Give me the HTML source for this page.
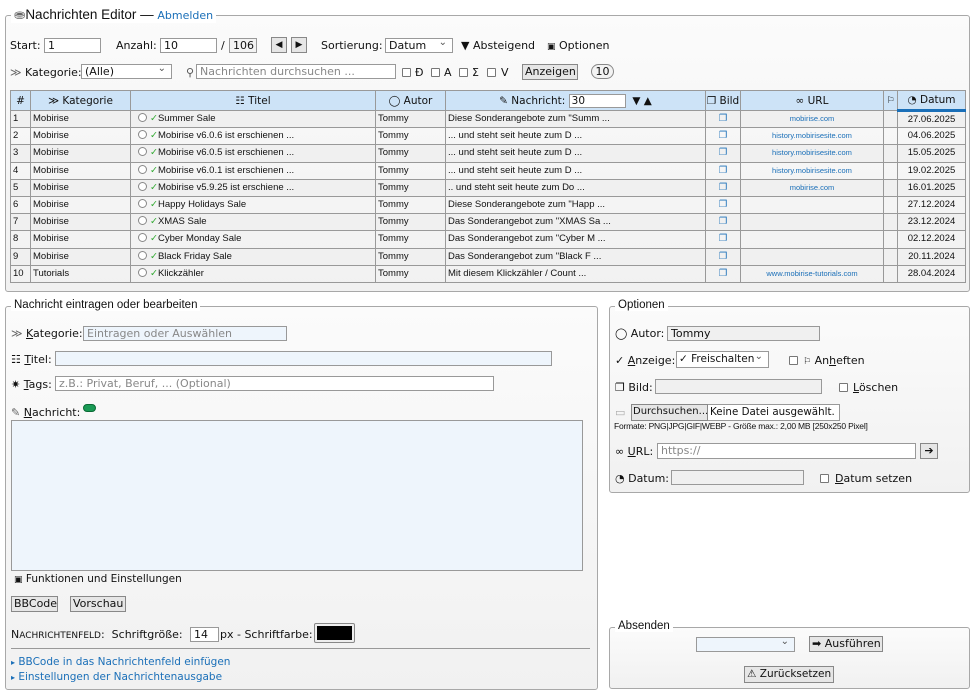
<!DOCTYPE html>
<html><head><meta charset="utf-8">
<style>
*{box-sizing:border-box}
body{margin:0;width:974px;height:691px;background:#fff;font-family:"DejaVu Sans","Liberation Sans",sans-serif;font-size:11px;color:#111;position:relative;overflow:hidden}
.a{position:absolute;white-space:nowrap}
.fs{position:absolute;border:1px solid #a8a8a8;border-radius:3px;background:linear-gradient(#fbfbfb,#f1f1f1)}
.lg{position:absolute;background:#fff;padding:0 3px;white-space:nowrap;font-family:"Liberation Sans",sans-serif;font-size:11.5px}
.in{position:absolute;border:1px solid #999;background:#fff;height:15px;font-size:11px;padding:0 3px;line-height:13px;color:#111;white-space:nowrap;overflow:hidden}
.blue{background:#eef5fc}
.ph{color:#888}
.btn{position:absolute;border:1px solid #888;background:#e6e6e6;height:16px;line-height:14px;font-size:11px;padding:0 2px;text-align:center;white-space:nowrap;overflow:hidden}
.cb{position:absolute;width:9px;height:9px;border:1px solid #777;background:#fff;border-radius:1px}
.sel::after{content:"⌄";position:absolute;right:5px;top:-3px;font-size:10px;color:#555}
a,.lnk{color:#1a6fb8;text-decoration:none}
table{position:absolute;left:10px;top:90px;width:955px;border-collapse:collapse;font-family:"Liberation Sans",Arial,sans-serif;font-size:9.5px;table-layout:fixed}
th{background:#cde3f7;border:1px solid #999;height:20px;font-family:"DejaVu Sans",sans-serif;font-weight:normal;font-size:10.5px;white-space:nowrap;overflow:hidden;padding:0}
td{border:1px solid #999;height:17.2px;padding:0 2px;white-space:nowrap;overflow:hidden;line-height:12px}
tr:nth-child(even) td{background:#f0f0f0}
.u{font-size:7.5px;color:#1a6fb8;text-align:center}
.c{text-align:center}
.ic{color:#1a6fb8;text-align:center}
.chk{color:#3a3}
.rad{display:inline-block;width:9px;height:9px;border:1px solid #888;border-radius:50%;vertical-align:-1px;margin:0 3px 0 5px;background:#fff}
</style></head><body>

<div class="fs" style="left:5px;top:15px;width:965px;height:277px"></div>
<div class="lg" style="left:11px;top:7px;font-size:13.5px"><span style="color:#666">&#9922;</span>Nachrichten Editor — <a style="font-size:11px;font-family:'DejaVu Sans',sans-serif">Abmelden</a></div>

<div class="a" style="left:10px;top:39px">Start:</div>
<div class="in" style="left:44px;top:38px;width:57px">1</div>
<div class="a" style="left:116px;top:39px">Anzahl:</div>
<div class="in" style="left:160px;top:38px;width:57px">10</div>
<div class="a" style="left:221px;top:39px">/</div>
<div class="in" style="left:229px;top:38px;width:28px;background:#f3f3f3">106</div>
<div class="btn" style="left:271px;top:37px;width:16px;padding:0;font-size:9px">◀</div>
<div class="btn" style="left:291px;top:37px;width:16px;padding:0;font-size:9px">▶</div>
<div class="a" style="left:321px;top:39px">Sortierung:</div>
<div class="in sel" style="left:385px;top:38px;width:68px">Datum</div>
<div class="a" style="left:461px;top:39px">▼ Absteigend</div>
<div class="a" style="left:547px;top:39px"><span style="font-size:9px">▣</span> Optionen</div>

<div class="a" style="left:10px;top:66px"><span style="color:#666">≫</span> Kategorie:</div>
<div class="in sel" style="left:81px;top:64px;width:91px">(Alle)</div>
<div class="a" style="left:186px;top:66px;color:#555">⚲</div>
<div class="in ph" style="left:196px;top:64px;width:200px">Nachrichten durchsuchen ...</div>
<div class="cb" style="left:402px;top:68px"></div><div class="a" style="left:415px;top:66px">Ð</div>
<div class="cb" style="left:431px;top:68px"></div><div class="a" style="left:444px;top:66px">A</div>
<div class="cb" style="left:459px;top:68px"></div><div class="a" style="left:472px;top:66px">Σ</div>
<div class="cb" style="left:487px;top:68px"></div><div class="a" style="left:501px;top:66px">V</div>
<div class="btn" style="left:522px;top:64px;width:56px">Anzeigen</div>
<div class="a" style="left:591px;top:64px;width:23px;height:15px;border:1px solid #888;border-radius:8px;text-align:center;line-height:13px;background:#f3f3f3">10</div>

<table>
<colgroup><col style="width:20px"><col style="width:100px"><col style="width:245px"><col style="width:70px"><col style="width:260px"><col style="width:35px"><col style="width:143px"><col style="width:14px"><col style="width:68px"></colgroup>
<tr><th>#</th><th>≫ Kategorie</th><th>☷ Titel</th><th>◯ Autor</th><th>✎ Nachricht: <span style="display:inline-block;width:57px;height:14px;border:1px solid #999;background:#fff;text-align:left;padding-left:2px;line-height:12px;vertical-align:middle">30</span> &nbsp;▼ ▲</th><th>❐ Bild</th><th>∞ URL</th><th style="font-size:9px">⚐</th><th style="border-bottom:3px solid #1a6fb8">◔ Datum</th></tr>
<tr><td>1</td><td>Mobirise</td><td><span class="rad"></span><span class="chk">✓</span>Summer Sale</td><td>Tommy</td><td>Diese Sonderangebote zum "Summ ...</td><td class="ic">❐</td><td class="u">mobirise.com</td><td></td><td class="c">27.06.2025</td></tr>
<tr><td>2</td><td>Mobirise</td><td><span class="rad"></span><span class="chk">✓</span>Mobirise v6.0.6 ist erschienen ...</td><td>Tommy</td><td>... und steht seit heute zum D ...</td><td class="ic">❐</td><td class="u">history.mobirisesite.com</td><td></td><td class="c">04.06.2025</td></tr>
<tr><td>3</td><td>Mobirise</td><td><span class="rad"></span><span class="chk">✓</span>Mobirise v6.0.5 ist erschienen ...</td><td>Tommy</td><td>... und steht seit heute zum D ...</td><td class="ic">❐</td><td class="u">history.mobirisesite.com</td><td></td><td class="c">15.05.2025</td></tr>
<tr><td>4</td><td>Mobirise</td><td><span class="rad"></span><span class="chk">✓</span>Mobirise v6.0.1 ist erschienen ...</td><td>Tommy</td><td>... und steht seit heute zum D ...</td><td class="ic">❐</td><td class="u">history.mobirisesite.com</td><td></td><td class="c">19.02.2025</td></tr>
<tr><td>5</td><td>Mobirise</td><td><span class="rad"></span><span class="chk">✓</span>Mobirise v5.9.25 ist erschiene ...</td><td>Tommy</td><td>.. und steht seit heute zum Do ...</td><td class="ic">❐</td><td class="u">mobirise.com</td><td></td><td class="c">16.01.2025</td></tr>
<tr><td>6</td><td>Mobirise</td><td><span class="rad"></span><span class="chk">✓</span>Happy Holidays Sale</td><td>Tommy</td><td>Diese Sonderangebote zum "Happ ...</td><td class="ic">❐</td><td></td><td></td><td class="c">27.12.2024</td></tr>
<tr><td>7</td><td>Mobirise</td><td><span class="rad"></span><span class="chk">✓</span>XMAS Sale</td><td>Tommy</td><td>Das Sonderangebot zum "XMAS Sa ...</td><td class="ic">❐</td><td></td><td></td><td class="c">23.12.2024</td></tr>
<tr><td>8</td><td>Mobirise</td><td><span class="rad"></span><span class="chk">✓</span>Cyber Monday Sale</td><td>Tommy</td><td>Das Sonderangebot zum "Cyber M ...</td><td class="ic">❐</td><td></td><td></td><td class="c">02.12.2024</td></tr>
<tr><td>9</td><td>Mobirise</td><td><span class="rad"></span><span class="chk">✓</span>Black Friday Sale</td><td>Tommy</td><td>Das Sonderangebot zum "Black F ...</td><td class="ic">❐</td><td></td><td></td><td class="c">20.11.2024</td></tr>
<tr><td>10</td><td>Tutorials</td><td><span class="rad"></span><span class="chk">✓</span>Klickzähler</td><td>Tommy</td><td>Mit diesem Klickzähler / Count ...</td><td class="ic">❐</td><td class="u">www.mobirise-tutorials.com</td><td></td><td class="c">28.04.2024</td></tr>
</table>

<div class="fs" style="left:5px;top:306px;width:593px;height:384px"></div>
<div class="lg" style="left:11px;top:299px">Nachricht eintragen oder bearbeiten</div>
<div class="a" style="left:11px;top:327px"><span style="color:#666">≫</span> <u>K</u>ategorie:</div>
<div class="in blue ph" style="left:83px;top:326px;width:204px">Eintragen oder Auswählen</div>
<div class="a" style="left:11px;top:353px">☷ <u>T</u>itel:</div>
<div class="in blue" style="left:55px;top:351px;width:497px"></div>
<div class="a" style="left:11px;top:378px">✷ <u>T</u>ags:</div>
<div class="in ph" style="left:55px;top:376px;width:439px">z.B.: Privat, Beruf, ... (Optional)</div>
<div class="a" style="left:11px;top:406px"><span style="color:#666">✎</span> <u>N</u>achricht:</div>
<div class="a" style="left:83px;top:404px;width:13px;height:8px;border-radius:5px;background:#1a9a55;border:1px solid #0a6a35"></div>
<div class="a" style="left:11px;top:420px;width:572px;height:151px;border:1px solid #999;background:#eef5fc"></div>
<div class="a" style="left:14px;top:573px;font-size:10.5px"><span style="font-size:9px">▣</span> Funktionen und Einstellungen</div>
<div class="btn" style="left:11px;top:596px;width:47px">BBCode</div>
<div class="btn" style="left:70px;top:596px;width:56px">Vorschau</div>
<div class="a" style="left:11px;top:628px;font-size:11px">N<span style="font-size:9px">ACHRICHTENFELD</span>: &nbsp;Schriftgröße:</div>
<div class="in" style="left:190px;top:627px;width:29px">14</div>
<div class="a" style="left:220px;top:628px">px - Schriftfarbe:</div>
<div class="a" style="left:314px;top:623px;width:41px;height:20px;border:1px solid #888;border-radius:2px;background:#eee;padding:2px"><div style="width:100%;height:100%;background:#000"></div></div>
<div class="a" style="left:11px;top:648px;width:579px;height:1px;background:#999"></div>
<div class="a lnk" style="left:11px;top:656px;font-size:10.5px"><span style="font-size:8px">▸</span> BBCode in das Nachrichtenfeld einfügen</div>
<div class="a lnk" style="left:11px;top:671px;font-size:10.5px"><span style="font-size:8px">▸</span> Einstellungen der Nachrichtenausgabe</div>

<div class="fs" style="left:609px;top:306px;width:361px;height:187px"></div>
<div class="lg" style="left:615px;top:299px">Optionen</div>
<div class="a" style="left:615px;top:327px">◯ Autor:</div>
<div class="in" style="left:667px;top:326px;width:153px;background:#f0f0f0">Tommy</div>
<div class="a" style="left:615px;top:354px">✓ <u>A</u>nzeige:</div>
<div class="in sel" style="left:676px;top:351px;width:93px;height:17px;line-height:15px;padding:0 2px;font-size:10.5px">✓ Freischalten</div>
<div class="cb" style="left:789px;top:356px"></div><div class="a" style="left:803px;top:354px"><span style="font-size:9px">⚐</span> An<u>h</u>eften</div>
<div class="a" style="left:615px;top:381px">❐ Bild:</div>
<div class="in" style="left:655px;top:379px;width:167px;background:#f0f0f0"></div>
<div class="cb" style="left:839px;top:383px"></div><div class="a" style="left:853px;top:381px"><u>L</u>öschen</div>
<div class="a" style="left:615px;top:406px;color:#aaa">▭</div>
<div class="a" style="left:631px;top:404px;width:209px;height:17px;border:1px solid #999;background:#fff"></div>
<div class="btn" style="left:631px;top:404px;width:77px;height:17px;padding:0 1px;font-size:10px">Durchsuchen...</div>
<div class="a" style="left:710px;top:406px;font-size:10.3px">Keine Datei ausgewählt.</div>
<div class="a" style="left:614px;top:421px;font-family:'Liberation Sans',sans-serif;font-size:8.5px;letter-spacing:-0.2px">Formate: PNG|JPG|GIF|WEBP - Größe max.: 2,00 MB [250x250 Pixel]</div>
<div class="a" style="left:615px;top:445px">∞ <u>U</u>RL:</div>
<div class="in ph" style="left:657px;top:443px;width:259px;height:16px">https://</div>
<div class="btn" style="left:920px;top:443px;width:18px;padding:0">➔</div>
<div class="a" style="left:615px;top:472px">◔ Datum:</div>
<div class="in" style="left:671px;top:470px;width:133px;background:#f0f0f0"></div>
<div class="cb" style="left:820px;top:474px"></div><div class="a" style="left:835px;top:472px"><u>D</u>atum setzen</div>

<div class="fs" style="left:609px;top:627px;width:361px;height:62px"></div>
<div class="lg" style="left:615px;top:620px">Absenden</div>
<div class="in sel" style="left:696px;top:637px;width:99px;background:#eef5fc"></div>
<div class="btn" style="left:809px;top:636px;width:74px">➡ Ausführen</div>
<div class="btn" style="left:744px;top:666px;width:90px;height:17px;font-size:10.5px">⚠ Zurücksetzen</div>

</body></html>
